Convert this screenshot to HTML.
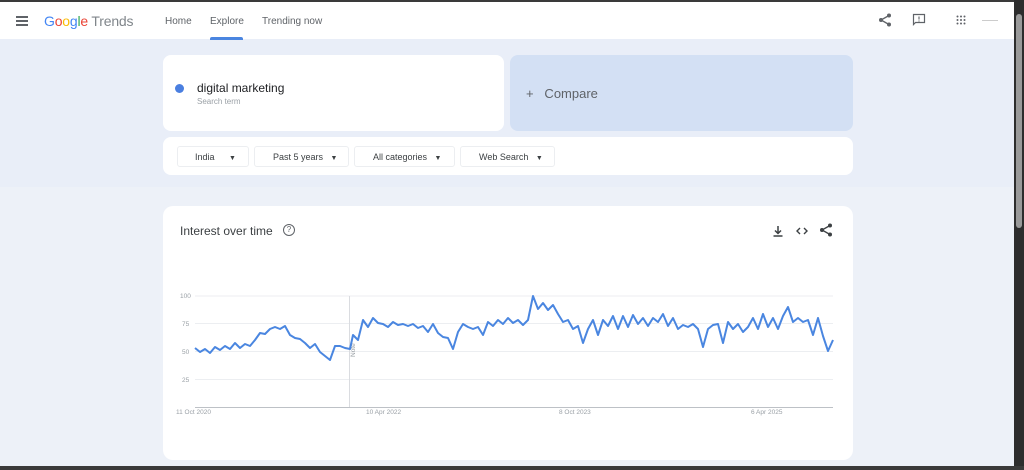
<!DOCTYPE html>
<html><head><style>
*{margin:0;padding:0;box-sizing:border-box}
body{width:1024px;height:470px;overflow:hidden;background:#edf1f8;font-family:"Liberation Sans",Arial,sans-serif;position:relative;color:#3c4043}
.abs{position:absolute}
</style></head><body>
<div class="abs" style="left:0;top:0;width:1024px;height:2px;background:#3a3a3a"></div>
<div class="abs" style="left:0;top:2px;width:1014px;height:37px;background:#fff"></div>
<div class="abs" style="left:0;top:39px;width:1014px;height:148px;background:#e9eef8"></div>
<div class="abs" style="left:1014px;top:0;width:10px;height:470px;background:#2d2d2d"></div>
<div class="abs" style="left:1016px;top:14px;width:6px;height:214px;background:#9a9a9a;border-radius:3px"></div>
<div class="abs" style="left:0;top:466px;width:1024px;height:4px;background:#3a3a3a"></div>
<!-- header -->
<div class="abs" style="left:16px;top:16px;width:12px;height:2px;background:#5f6368;box-shadow:0 4px 0 #5f6368,0 8px 0 #5f6368"></div>
<div class="abs" style="left:44px;top:13px;font-size:14px;letter-spacing:-0.2px"><span style="color:#4285f4">G</span><span style="color:#ea4335">o</span><span style="color:#fbbc05">o</span><span style="color:#4285f4">g</span><span style="color:#34a853">l</span><span style="color:#ea4335">e</span><span style="color:#80868b"> Trends</span></div>
<div class="abs" style="left:165px;top:16px;font-size:10px;color:#5f6368">Home</div>
<div class="abs" style="left:210px;top:16px;font-size:10px;color:#5f6368">Explore</div>
<div class="abs" style="left:210px;top:37px;width:33px;height:3px;background:#4a85e0;border-radius:2px 2px 0 0"></div>
<div class="abs" style="left:262px;top:16px;font-size:10px;color:#5f6368">Trending now</div>
<svg class="abs" style="left:878px;top:13px" width="14" height="14" viewBox="0 0 14 14"><g fill="#5f6368"><circle cx="11" cy="2.5" r="2"/><circle cx="3" cy="7" r="2"/><circle cx="11" cy="11.5" r="2"/></g><path d="M11 2.5L3 7L11 11.5" stroke="#5f6368" stroke-width="1.3" fill="none"/></svg>
<svg class="abs" style="left:912px;top:13px" width="14" height="14" viewBox="0 0 14 14"><path d="M1.5 1.5h11v8h-9l-2 2z" stroke="#5f6368" stroke-width="1.2" fill="none"/><path d="M7 3.5v3M7 7.5v1" stroke="#5f6368" stroke-width="1.1"/></svg>
<svg class="abs" style="left:956px;top:15px" width="10" height="10" viewBox="0 0 10 10"><g fill="#5f6368"><circle cx="1.5" cy="1.5" r="1"/><circle cx="5" cy="1.5" r="1"/><circle cx="8.5" cy="1.5" r="1"/><circle cx="1.5" cy="5" r="1"/><circle cx="5" cy="5" r="1"/><circle cx="8.5" cy="5" r="1"/><circle cx="1.5" cy="8.5" r="1"/><circle cx="5" cy="8.5" r="1"/><circle cx="8.5" cy="8.5" r="1"/></g></svg>
<div class="abs" style="left:982px;top:20px;width:16px;height:1px;background:#ccc"></div>
<!-- search card -->
<div class="abs" style="left:163px;top:55px;width:341px;height:76px;background:#fff;border-radius:8px"></div>
<div class="abs" style="left:175px;top:84px;width:9px;height:9px;border-radius:50%;background:#4a7fe0"></div>
<div class="abs" style="left:197px;top:81px;font-size:12px;color:#202124">digital marketing</div>
<div class="abs" style="left:197px;top:97px;font-size:8px;color:#9aa0a6">Search term</div>
<div class="abs" style="left:510px;top:55px;width:343px;height:76px;background:#d3e0f4;border-radius:8px"></div>
<div class="abs" style="left:526px;top:86px;font-size:13px;color:#5f6368">+&nbsp;&nbsp;&nbsp;Compare</div>
<!-- filters -->
<div class="abs" style="left:163px;top:137px;width:690px;height:38px;background:#fff;border-radius:8px"></div>
<div class="abs" style="left:177px;top:146px;width:72px;height:21px;border:1px solid #eceef1;border-radius:3px;font-size:9px;padding:5px 0 0 17px;color:#3c4043">India <span style="margin-left:12px;font-size:7px">▼</span></div>
<div class="abs" style="left:254px;top:146px;width:95px;height:21px;border:1px solid #eceef1;border-radius:3px;font-size:9px;padding:5px 0 0 18px">Past 5 years <span style="margin-left:5px;font-size:7px">▼</span></div>
<div class="abs" style="left:354px;top:146px;width:101px;height:21px;border:1px solid #eceef1;border-radius:3px;font-size:9px;padding:5px 0 0 18px">All categories <span style="margin-left:5px;font-size:7px">▼</span></div>
<div class="abs" style="left:460px;top:146px;width:95px;height:21px;border:1px solid #eceef1;border-radius:3px;font-size:9px;padding:5px 0 0 18px">Web Search <span style="margin-left:5px;font-size:7px">▼</span></div>
<!-- chart card -->
<div class="abs" style="left:163px;top:206px;width:690px;height:254px;background:#fff;border-radius:10px"></div>
<div class="abs" style="left:180px;top:224px;font-size:12px;color:#3c4043">Interest over time</div>
<div class="abs" style="left:283px;top:224px;width:12px;height:12px;border:1.2px solid #5f6368;border-radius:50%;font-size:8px;text-align:center;line-height:10px;color:#5f6368">?</div>
<svg class="abs" style="left:771px;top:224px" width="14" height="14" viewBox="0 0 14 14"><path d="M7 2v7M4 6.5l3 3 3-3M2.5 12h9" stroke="#3c4043" stroke-width="1.5" fill="none"/></svg>
<svg class="abs" style="left:795px;top:224px" width="14" height="14" viewBox="0 0 14 14"><path d="M5 4L2 7l3 3M9 4l3 3-3 3" stroke="#3c4043" stroke-width="1.4" fill="none"/></svg>
<svg class="abs" style="left:819px;top:223px" width="14" height="14" viewBox="0 0 14 14"><g fill="#3c4043"><circle cx="11" cy="2.5" r="2"/><circle cx="3" cy="7" r="2"/><circle cx="11" cy="11.5" r="2"/></g><path d="M11 2.5L3 7L11 11.5" stroke="#3c4043" stroke-width="1.3" fill="none"/></svg>
<svg class="abs" style="left:0;top:0" width="1024" height="470">
<g stroke="#eceef1" stroke-width="1"><line x1="195" y1="296" x2="833" y2="296"/><line x1="195" y1="323.5" x2="833" y2="323.5"/><line x1="195" y1="351.5" x2="833" y2="351.5"/><line x1="195" y1="379.5" x2="833" y2="379.5"/></g>
<line x1="195" y1="407.5" x2="833" y2="407.5" stroke="#bdc1c6"/>
<line x1="349.5" y1="296" x2="349.5" y2="407" stroke="#dadce0"/>
<g font-size="6.5" fill="#9aa0a6" font-family="Liberation Sans"><text x="180" y="298">100</text><text x="182" y="326">75</text><text x="182" y="354">50</text><text x="182" y="382">25</text>
<text x="176" y="414">11 Oct 2020</text><text x="366" y="414">10 Apr 2022</text><text x="559" y="414">8 Oct 2023</text><text x="751" y="414">6 Apr 2025</text>
<text transform="translate(355,357) rotate(-90)">Note</text></g>
<polyline fill="none" stroke="#4a86e0" stroke-width="2" stroke-linejoin="round" points="195,348 200,352 205,349 210,353 215,347 220,350 225,346 230,349 235,343 240,348 245,344 250,346 255,340 260,333 265,334 270,329 275,327 280,329 285,326 290,335 295,338 300,339 305,343 310,348 315,344 320,352 325,356 330,360 335,346 340,346 345,348 350,349 353,335 358,340 363,320 368,327 373,318 378,323 383,324 388,327 393,322 398,325 403,324 408,326 413,324 418,328 423,326 428,332 433,324 438,333 443,337 448,338 453,349 458,332 463,324 468,327 473,329 478,327 483,335 488,322 493,326 498,320 503,324 508,318 513,323 518,320 523,325 528,320 533,296 538,309 543,303 548,310 553,305 558,314 563,322 568,320 573,329 578,326 583,343 588,329 593,320 598,335 603,320 608,326 613,316 618,329 623,316 628,327 633,315 638,324 643,318 648,326 653,318 658,322 663,314 668,326 673,318 678,329 683,325 688,327 693,324 698,329 703,347 708,329 713,325 718,324 723,343 728,322 733,329 738,324 743,332 748,327 753,318 758,329 763,314 768,327 773,318 778,329 783,316 788,307 793,322 798,318 803,322 808,320 813,335 818,318 823,336 828,351 833,340"/>
</svg>
</body></html>
